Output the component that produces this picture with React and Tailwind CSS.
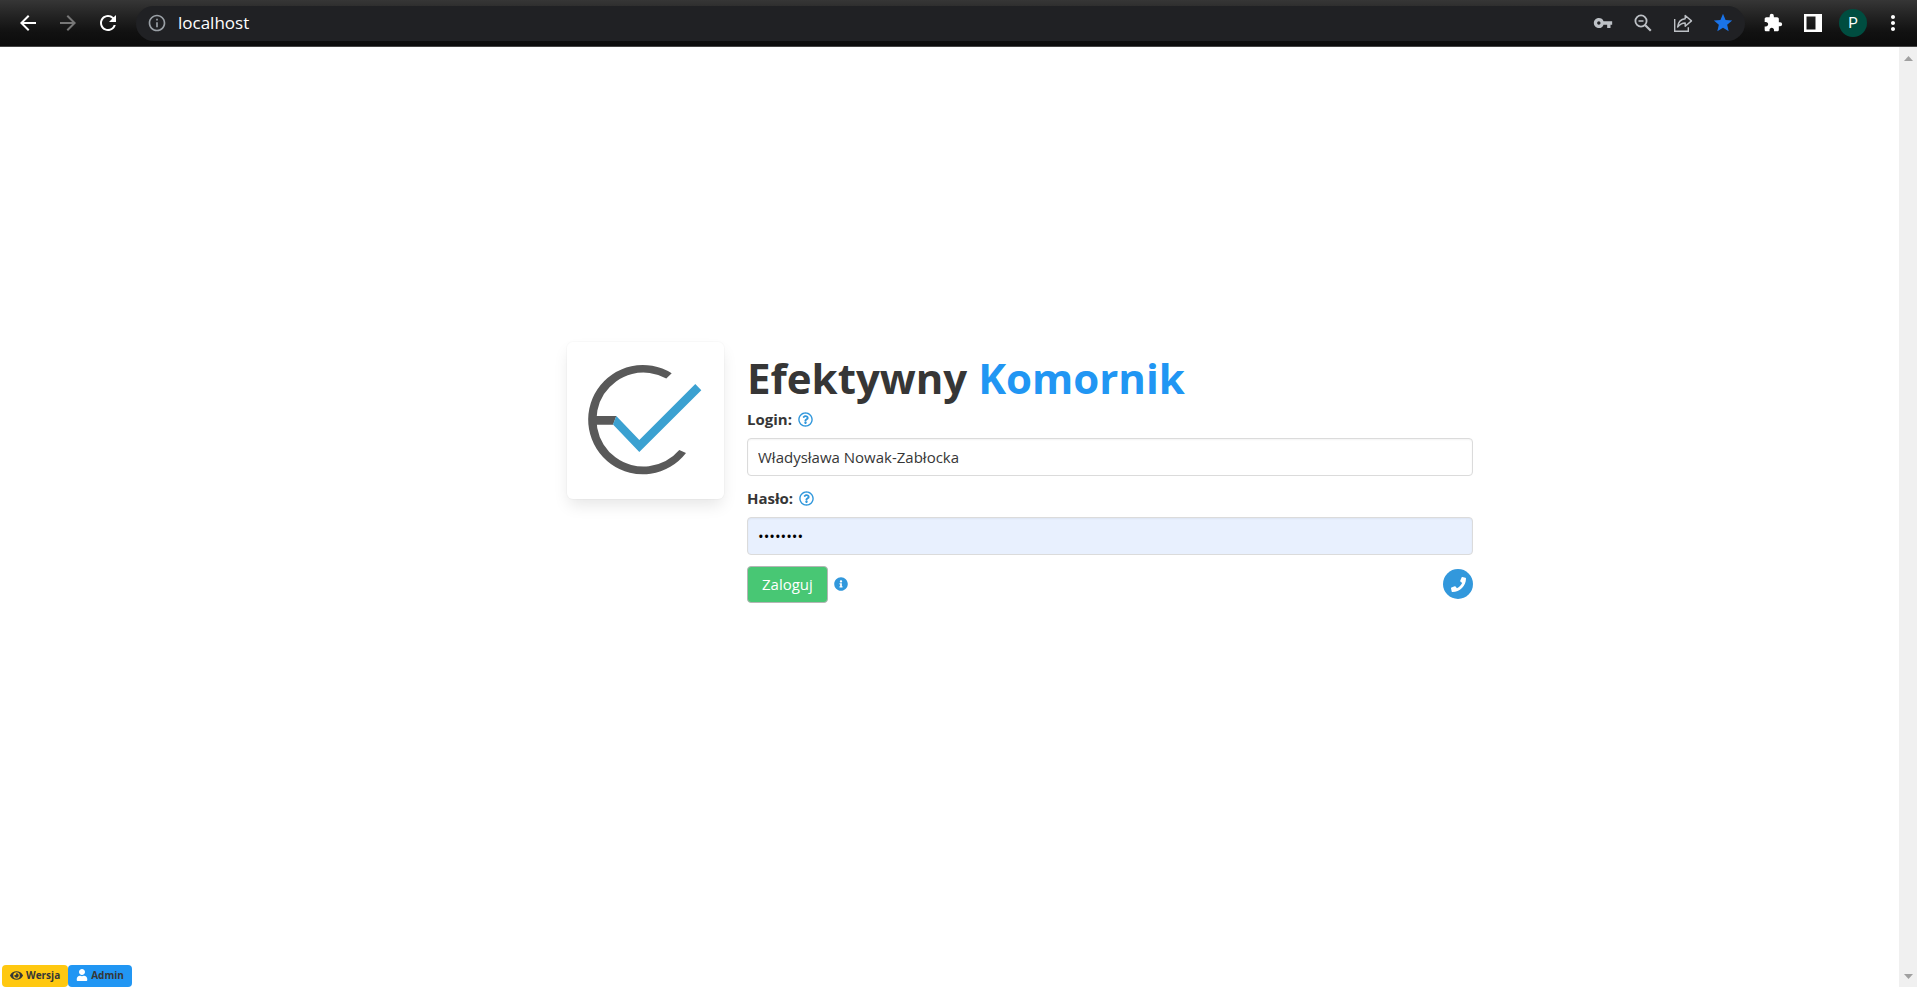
import { useState } from "react";
import {
  MdArrowBack,
  MdArrowForward,
  MdRefresh,
  MdInfoOutline,
  MdVpnKey,
  MdStar,
  MdExtension,
  MdMoreVert,
} from "react-icons/md";
import {
  FaRegQuestionCircle,
  FaInfoCircle,
  FaPhone,
  FaEye,
  FaUser,
} from "react-icons/fa";

function ToolButton({ label, className = "text-white", children }) {
  return (
    <button
      type="button"
      aria-label={label}
      className={`flex h-8 w-10 items-center justify-center ${className}`}
    >
      {children}
    </button>
  );
}

function ZoomIcon() {
  return (
    <svg width="18" height="18" viewBox="0 0 18 18" fill="none" stroke="currentColor">
      <circle cx="7" cy="7" r="5.6" strokeWidth="1.8" />
      <path d="M4.500 7h5" strokeWidth="1.500" />
      <path d="M11 11l5.800 5.800" strokeWidth="2.200" />
    </svg>
  );
}

function ShareIcon() {
  return (
    <svg width="20" height="20" viewBox="0 0 20 20" fill="none" stroke="currentColor" strokeWidth="1.4">
      <path d="M1.7 6v12.3h13.6v-4" />
      <path d="M12.2 2.5v3.3C7.8 6.2 5.2 9 4.6 14c2-2.700 4.200-3.900 7.600-4v3.300L18.500 7.900z" strokeLinejoin="round" />
    </svg>
  );
}

function PanelIcon() {
  return (
    <svg width="18" height="18" viewBox="0 0 18 18" fill="currentColor">
      <path fillRule="evenodd" d="M0 0h18v18H0zM2.500 2.500v13H11.500v-13z" />
    </svg>
  );
}

function BrowserBar() {
  return (
    <header className="flex h-[47px] shrink-0 items-center border-b border-[#444] bg-linear-to-b from-[#363636] via-[#111] via-70% to-[#0c0c0c] pr-1 pl-2">
      <ToolButton label="Back">
        <MdArrowBack size={24} />
      </ToolButton>
      <ToolButton label="Forward" className="text-[#777]">
        <MdArrowForward size={24} />
      </ToolButton>
      <ToolButton label="Reload">
        <MdRefresh size={24} />
      </ToolButton>

      <div className="mx-2 flex h-[35px] flex-1 items-center rounded-full bg-[#202124] pr-0.5 pl-[11px]">
        <MdInfoOutline size={20} className="text-[#9aa0a6]" />
        <input
          type="text"
          aria-label="Address"
          defaultValue="localhost"
          className="ml-[11px] min-w-0 flex-1 bg-transparent text-[17px] text-white outline-none"
        />
        <ToolButton label="Passwords" className="text-[#bdc1c6]">
          <MdVpnKey size={20} />
        </ToolButton>
        <ToolButton label="Zoom" className="text-[#bdc1c6]">
          <ZoomIcon />
        </ToolButton>
        <ToolButton label="Share" className="text-[#bdc1c6]">
          <ShareIcon />
        </ToolButton>
        <ToolButton label="Bookmark" className="text-[#1a73e8]">
          <MdStar size={22} />
        </ToolButton>
      </div>

      <ToolButton label="Extensions">
        <MdExtension size={20} />
      </ToolButton>
      <ToolButton label="Side panel">
        <PanelIcon />
      </ToolButton>
      <ToolButton label="Profile">
        <span className="flex size-7 items-center justify-center rounded-full bg-[#004d40] font-[Roboto,sans-serif] text-[15px]">
          P
        </span>
      </ToolButton>
      <ToolButton label="Menu">
        <MdMoreVert size={24} />
      </ToolButton>
    </header>
  );
}

function Logo() {
  return (
    <div className="size-[157px] shrink-0 rounded-md bg-white shadow-[0_8px_16px_-2px_rgba(10,10,10,0.1),0_0_0_1px_rgba(10,10,10,0.02)]">
      <svg viewBox="0 0 157 157" className="size-full">
        <path
          d="M104.700 31.300A54.600 54.600 0 1 0 119 111L112.300 108A47 47 0 1 1 99.300 36.500Z"
          fill="#595959"
        />
        <path d="M26 74H49.300L46 82.700H26z" fill="#595959" />
        <path d="M128.300 42L134.300 48.300L72.300 110L46 82.500L49.300 74L72.300 98z" fill="#3ba1d1" />
      </svg>
    </div>
  );
}

function Field({ id, label, className, ...props }) {
  return (
    <div className="mb-[11px]">
      <div className="mb-1.5 flex h-6 items-center gap-1.5">
        <label htmlFor={id} className="text-[15px] font-bold">
          {label}
        </label>
        <FaRegQuestionCircle size={15} className="text-[#3298dc]" />
      </div>
      <input
        id={id}
        className={`block h-[38px] w-full rounded border border-[#dbdbdb] px-2.5 text-[15px] shadow-[inset_0_1px_2px_rgba(10,10,10,0.05)] outline-none ${className}`}
        {...props}
      />
    </div>
  );
}

function LoginForm() {
  const [login, setLogin] = useState("Władysława Nowak-Zabłocka");
  const [password, setPassword] = useState("haslo123");

  return (
    <form className="flex-1" onSubmit={(e) => e.preventDefault()}>
      <h1 className="mt-2 mb-0.5 text-[42px] leading-[56px] font-bold">
        Efektywny <span className="text-[#2196f3]">Komornik</span>
      </h1>
      <Field
        id="login"
        label="Login:"
        type="text"
        className="bg-white"
        value={login}
        onChange={(e) => setLogin(e.target.value)}
      />
      <Field
        id="password"
        label="Hasło:"
        type="password"
        className="bg-[#e8f0fe] text-black"
        value={password}
        onChange={(e) => setPassword(e.target.value)}
      />
      <div className="flex items-center">
        <button
          type="submit"
          className="h-[37px] rounded-sm border border-[#b5b5b5] bg-[#48c774] px-3.5 text-[15px] text-white"
        >
          Zaloguj
        </button>
        <FaInfoCircle size={14} className="ml-1.5 text-[#3298dc]" />
        <a
          href="#kontakt"
          aria-label="Kontakt"
          className="ml-auto flex size-[30px] items-center justify-center rounded-full bg-[#3298dc] text-white"
        >
          <FaPhone size={15} />
        </a>
      </div>
    </form>
  );
}

function ScrollBar() {
  return (
    <div className="flex w-[18px] shrink-0 flex-col items-center justify-between bg-[#f0f0f0] pt-[9px] pb-2 text-[#a0a0a0]">
      <svg width="9" height="5" viewBox="0 0 9 5" fill="currentColor">
        <path d="M4.500 0L9 5H0z" />
      </svg>
      <svg width="9" height="5" viewBox="0 0 9 5" fill="currentColor">
        <path d="M4.500 5L9 0H0z" />
      </svg>
    </div>
  );
}

export default function App() {
  return (
    <div className="flex h-screen flex-col overflow-hidden bg-white font-['Open_Sans',sans-serif] text-[#363636]">
      <BrowserBar />
      <div className="flex min-h-0 flex-1">
        <div className="flex flex-1 flex-col">
          <main className="flex flex-1 items-center justify-center pb-[68px] pl-[141px]">
            <div className="flex w-full max-w-[906px] items-start gap-[23px]">
              <Logo />
              <LoginForm />
            </div>
          </main>
          <footer className="flex pl-0.5 text-[10px] font-bold">
            <button type="button" className="flex h-[22px] items-center gap-[3px] rounded bg-[#ffc810] px-2 pb-0.5">
              <FaEye size={13} />
              Wersja
            </button>
            <button type="button" className="flex h-[22px] items-center gap-[3px] rounded bg-[#2196f3] px-2 pb-0.5">
              <FaUser size={12} className="text-white" />
              Admin
            </button>
          </footer>
        </div>
        <ScrollBar />
      </div>
    </div>
  );
}
